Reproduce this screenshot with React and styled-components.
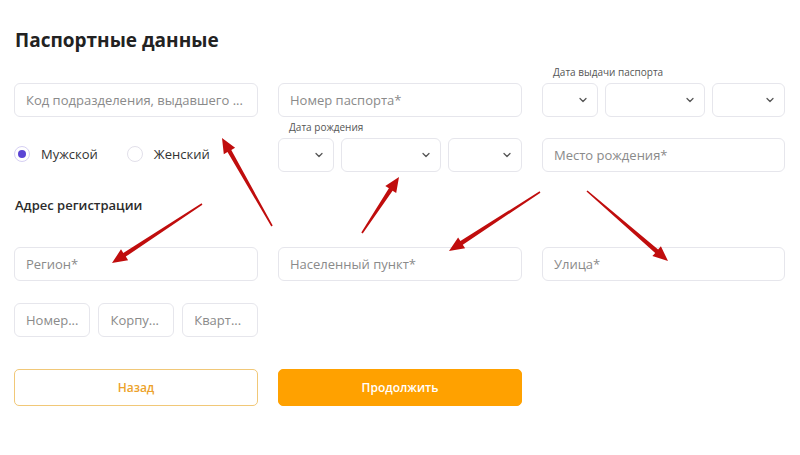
import React from 'react';
import styled, { createGlobalStyle } from 'styled-components';
import { ChevronDown } from 'lucide-react';

const GlobalStyle = createGlobalStyle`
  body {
    margin: 0;
    background: #ffffff;
    font-family: "Open Sans", "Noto Sans", sans-serif;
    color: #2b2b2b;
  }
`;

const Page = styled.div`
  position: relative;
  width: 800px;
  height: 455px;
  padding: 26px 15px 0 14px;
  box-sizing: border-box;
  overflow: hidden;
`;

const Title = styled.h1`
  margin: 0 0 12px 1px;
  font-size: 19px;
  line-height: 28px;
  font-weight: 700;
  color: #222;
`;

const Grid = styled.div`
  display: grid;
  grid-template-columns: 244px 244px 243px;
  column-gap: 20px;
  row-gap: ${(p) => p.$rowGap || 4}px;
  align-items: end;
`;

const Field = styled.div`
  height: 34px;
  border: 1px solid #e6e6ec;
  border-radius: 6px;
  box-sizing: border-box;
  display: flex;
  align-items: center;
  padding: 0 11px;
  font-size: 13px;
  color: #8a8a8a;
  white-space: nowrap;
  background: #fff;
`;

const DateField = styled.div`
  display: flex;
  flex-direction: column;
  gap: 5px;
`;

const DateLabel = styled.div`
  font-size: 10px;
  line-height: 12px;
  color: #555;
  padding-left: 11px;
`;

const Selects = styled.div`
  display: grid;
  grid-template-columns: 56px 100px 1fr;
  gap: 7px;
`;

const Select = styled(Field)`
  justify-content: flex-end;
  padding: 0 8px;
  color: #555;
`;

const Radios = styled.div`
  display: flex;
  align-items: center;
  height: 34px;
  padding-bottom: 3px;
  box-sizing: border-box;
  gap: 29px;
`;

const RadioItem = styled.label`
  display: flex;
  align-items: center;
  gap: 11px;
  font-size: 13px;
  color: #333;
`;

const RadioCircle = styled.span`
  width: 16px;
  height: 16px;
  border-radius: 50%;
  border: 1px solid ${(p) => (p.$checked ? '#d6d0f3' : '#e2e0ea')};
  box-sizing: border-box;
  display: flex;
  align-items: center;
  justify-content: center;

  &::after {
    content: '';
    width: 8px;
    height: 8px;
    border-radius: 50%;
    background: ${(p) => (p.$checked ? '#5a44d4' : 'transparent')};
  }
`;

const SubTitle = styled.h2`
  margin: 24px 0 33px 1px;
  font-size: 13px;
  line-height: 18px;
  font-weight: 600;
  color: #2b2b2b;
`;

const SmallFields = styled.div`
  display: grid;
  grid-template-columns: repeat(3, 1fr);
  gap: 8px;
`;

const Buttons = styled.div`
  display: grid;
  grid-template-columns: 244px 244px;
  column-gap: 20px;
  margin-top: 32px;
`;

const Button = styled.button`
  height: 37px;
  border-radius: 5px;
  font-family: "Open Sans", "Noto Sans", sans-serif;
  font-size: 12px;
  font-weight: 600;
  cursor: pointer;
  border: 1px solid ${(p) => (p.$primary ? '#ffa100' : '#f1c878')};
  background: ${(p) => (p.$primary ? '#ffa100' : '#fff')};
  color: ${(p) => (p.$primary ? '#fff' : '#eca22a')};
`;

const Overlay = styled.svg`
  position: absolute;
  left: 0;
  top: 0;
  pointer-events: none;
`;

const arrows = [
  [272, 226, 222, 138],
  [362, 233, 399, 177],
  [202, 204, 112, 263],
  [540, 192, 449, 251],
  [587, 191, 668, 261],
];

// стрелка сужается к хвосту, как нарисованная от руки
const arrowPoints = ([x1, y1, x2, y2]) => {
  const dx = x2 - x1;
  const dy = y2 - y1;
  const len = Math.hypot(dx, dy);
  const ux = dx / len;
  const uy = dy / len;
  const nx = -uy;
  const ny = ux;
  const headLen = 15;
  const bx = x2 - ux * headLen;
  const by = y2 - uy * headLen;
  const pts = [
    [x1 + nx * 0.8, y1 + ny * 0.8],
    [bx + nx * 2.2, by + ny * 2.2],
    [bx + nx * 6.5, by + ny * 6.5],
    [x2, y2],
    [bx - nx * 6.5, by - ny * 6.5],
    [bx - nx * 2.2, by - ny * 2.2],
    [x1 - nx * 0.8, y1 - ny * 0.8],
  ];
  return pts.map((p) => p.map((v) => v.toFixed(1)).join(',')).join(' ');
};

const DateSelects = ({ label }) => (
  <DateField>
    <DateLabel>{label}</DateLabel>
    <Selects>
      {[0, 1, 2].map((i) => (
        <Select key={i}>
          <ChevronDown size={12} strokeWidth={2.5} />
        </Select>
      ))}
    </Selects>
  </DateField>
);

const App = () => (
  <Page>
    <GlobalStyle />
    <Title>Паспортные данные</Title>

    <Grid>
      <Field>Код подразделения, выдавшего ...</Field>
      <Field>Номер паспорта*</Field>
      <DateSelects label="Дата выдачи паспорта" />

      <Radios>
        <RadioItem>
          <RadioCircle $checked />
          Мужской
        </RadioItem>
        <RadioItem>
          <RadioCircle />
          Женский
        </RadioItem>
      </Radios>
      <DateSelects label="Дата рождения" />
      <Field>Место рождения*</Field>
    </Grid>

    <SubTitle>Адрес регистрации</SubTitle>

    <Grid $rowGap={22}>
      <Field>Регион*</Field>
      <Field>Населенный пункт*</Field>
      <Field>Улица*</Field>
      <SmallFields>
        <Field>Номер...</Field>
        <Field>Корпу...</Field>
        <Field>Кварт...</Field>
      </SmallFields>
    </Grid>

    <Buttons>
      <Button>Назад</Button>
      <Button $primary>Продолжить</Button>
    </Buttons>

    <Overlay width="800" height="455" viewBox="0 0 800 455">
      {arrows.map((a, i) => (
        <polygon key={i} points={arrowPoints(a)} fill="#c00d0d" />
      ))}
    </Overlay>
  </Page>
);

export default App;
